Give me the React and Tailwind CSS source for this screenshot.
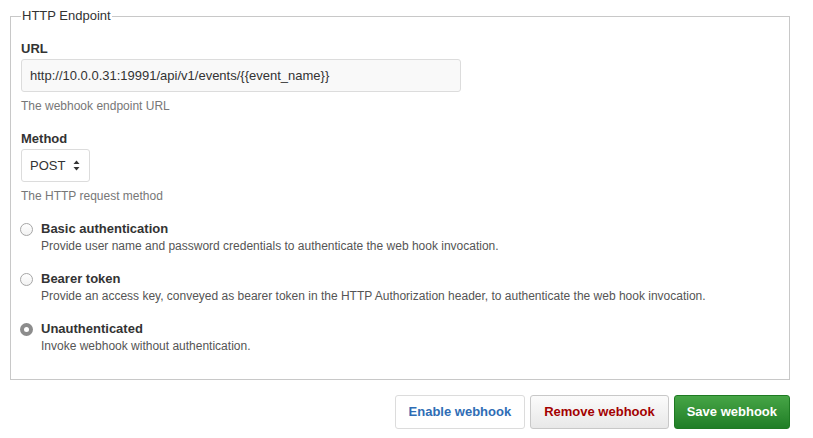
const options = [
  {
    id: 'basic',
    title: 'Basic authentication',
    desc: 'Provide user name and password credentials to authenticate the web hook invocation.',
  },
  {
    id: 'bearer',
    title: 'Bearer token',
    desc: 'Provide an access key, conveyed as bearer token in the HTTP Authorization header, to authenticate the web hook invocation.',
  },
  {
    id: 'none',
    title: 'Unauthenticated',
    desc: 'Invoke webhook without authentication.',
  },
];

const Radio = ({ checked }) =>
  checked ? (
    <span className="w-[13px] h-[13px] rounded-full bg-[#8c8c8c] flex items-center justify-center shrink-0">
      <span className="w-[5px] h-[5px] rounded-full bg-white" />
    </span>
  ) : (
    <span className="w-[13px] h-[13px] rounded-full border border-[#a6a6a6] bg-gradient-to-b from-white to-[#f2f2f2] shrink-0" />
  );

const App = () => {
  const selected = 'none';

  return (
    <div className="min-h-screen bg-white text-[13px] text-[#333] pt-[8px] pl-[10px]" style={{ fontFamily: '"Liberation Sans", Arial, sans-serif' }}>
      <fieldset className="w-[780px] border border-[#c8c8c8] pl-[10px] pr-[10px] pb-[25px]">
        <legend className="px-[1px] leading-[16px] text-[13px] text-[#333]">HTTP Endpoint</legend>

        <div className="mt-[16px]">
          <label className="block font-bold leading-[18px]">URL</label>
          <div className="mt-[1px] w-[440px] h-[33px] bg-[#f9f9f9] border border-[#dcdcdc] rounded-[3px] flex items-center px-[8px]">
            http://10.0.0.31:19991/api/v1/events/{'{{'}event_name{'}}'}
          </div>
          <p className="mt-[6px] text-[12px] leading-[16px] text-[#777]">The webhook endpoint URL</p>
        </div>

        <div className="mt-[16px]">
          <label className="block font-bold leading-[18px]">Method</label>
          <div className="mt-[1px] w-[69px] h-[33px] bg-white border border-[#dcdcdc] rounded-[3px] flex items-center pl-[8px] gap-[8px]">
            <span>POST</span>
            <svg width="7" height="11" viewBox="0 0 7 11" className="fill-[#333]">
              <path d="M3.5 0.5 L6.5 4 L0.5 4 Z" />
              <path d="M0.5 7 L6.5 7 L3.5 10.5 Z" />
            </svg>
          </div>
          <p className="mt-[6px] text-[12px] leading-[16px] text-[#777]">The HTTP request method</p>
        </div>

        <div className="mt-[16px] flex flex-col gap-[16px]">
          {options.map((o) => (
            <div key={o.id} className="flex flex-col">
              <div className="flex items-center gap-[8px] -ml-[1px]">
                <Radio checked={o.id === selected} />
                <span className="font-bold leading-[18px]">{o.title}</span>
              </div>
              <p className="pl-[20px] text-[12px] leading-[16px] text-[#555]">{o.desc}</p>
            </div>
          ))}
        </div>
      </fieldset>

      <div className="w-[780px] mt-[15px] flex justify-end gap-[5px]">
        <button className="h-[34px] px-[13px] rounded-[3px] border border-[#dcdcdc] bg-white font-bold text-[#2f6db5]">
          Enable webhook
        </button>
        <button className="h-[34px] px-[13px] rounded-[3px] border border-[#c8c8c8] bg-gradient-to-b from-[#fbfbfb] to-[#e8e8e8] font-bold text-[#a30000]">
          Remove webhook
        </button>
        <button className="h-[34px] px-[12px] rounded-[3px] border border-[#1e7a22] bg-gradient-to-b from-[#46a546] to-[#1f7e26] font-bold text-white">
          Save webhook
        </button>
      </div>
    </div>
  );
};

export default App;
